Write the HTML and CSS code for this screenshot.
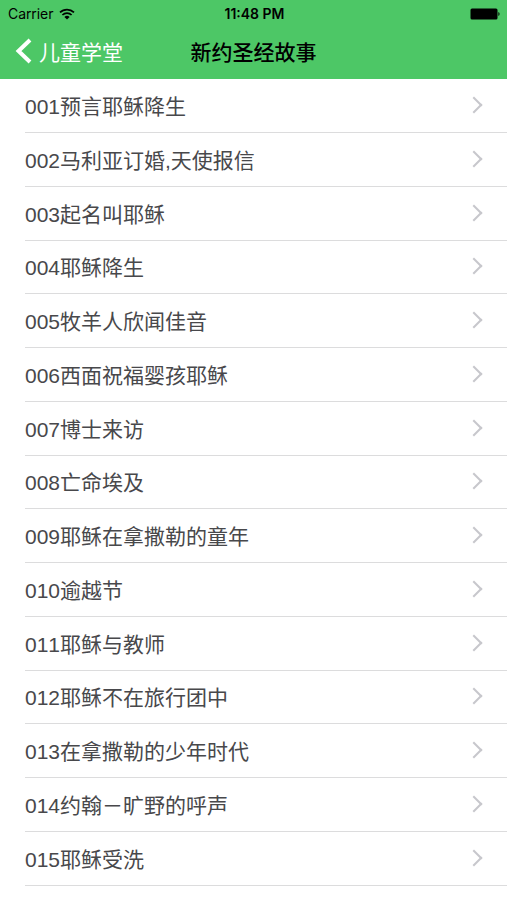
FILE: index.html
```html
<!DOCTYPE html>
<html lang="zh-CN">
<head>
    <meta charset="UTF-8">
    <meta name="viewport" content="width=device-width, initial-scale=1.0">
    <title>新约圣经故事</title>
    <link rel="stylesheet" href="styles.css">
</head>
<body>
    <header class="header">
        <div class="status-bar">
            <div class="carrier">
                <span>Carrier</span>
                <svg class="wifi" viewBox="0 0 16 12" aria-hidden="true">
                    <path d="M1 4.4a10 10 0 0 1 14 0M3.4 7a6.6 6.6 0 0 1 9.2 0" fill="none" stroke="#000" stroke-width="1.7"/>
                    <path d="M8 11.6 5.4 9a3.8 3.8 0 0 1 5.2 0z"/>
                </svg>
            </div>
            <div class="time">11:48 PM</div>
            <svg class="battery" viewBox="0 0 31 12" aria-hidden="true">
                <rect x="0.5" y="0.5" width="27" height="11" rx="1.5"/>
                <path d="M28.4 4a2.3 2.3 0 0 1 0 4z"/>
            </svg>
        </div>
        <nav class="nav-bar">
            <a class="back" href="#">
                <svg class="back-icon" viewBox="0 0 17 26" aria-hidden="true">
                    <path d="M15 2 3.5 13 15 24" fill="none" stroke="#fff" stroke-width="4"/>
                </svg>
                <span>儿童学堂</span>
            </a>
            <h1 class="title">新约圣经故事</h1>
        </nav>
    </header>
    <main>
        <ul class="story-list">
            <li><a class="story" href="#">001预言耶稣降生</a></li>
            <li><a class="story" href="#">002马利亚订婚,天使报信</a></li>
            <li><a class="story" href="#">003起名叫耶稣</a></li>
            <li><a class="story" href="#">004耶稣降生</a></li>
            <li><a class="story" href="#">005牧羊人欣闻佳音</a></li>
            <li><a class="story" href="#">006西面祝福婴孩耶稣</a></li>
            <li><a class="story" href="#">007博士来访</a></li>
            <li><a class="story" href="#">008亡命埃及</a></li>
            <li><a class="story" href="#">009耶稣在拿撒勒的童年</a></li>
            <li><a class="story" href="#">010逾越节</a></li>
            <li><a class="story" href="#">011耶稣与教师</a></li>
            <li><a class="story" href="#">012耶稣不在旅行团中</a></li>
            <li><a class="story" href="#">013在拿撒勒的少年时代</a></li>
            <li><a class="story" href="#">014约翰－旷野的呼声</a></li>
            <li><a class="story" href="#">015耶稣受洗</a></li>
        </ul>
    </main>
</body>
</html>
```
FILE: styles.css
```css
* {
    margin: 0;
    padding: 0;
    box-sizing: border-box;
}
body {
    background-color: white;
    color: #48484b;
    font-family: "Liberation Sans", "Noto Sans CJK SC", sans-serif;
    font-kerning: none;
}
a {
    color: inherit;
    text-decoration: none;
}
.header {
    background-color: #4dc766;
    color: black;
}
.status-bar {
    display: grid;
    grid-template-columns: 1fr auto 1fr;
    align-items: center;
    height: 27px;
    padding: 0 6px 0 8px;
    font-family: Inter, sans-serif;
    font-size: 14px;
}
.carrier {
    display: flex;
    align-items: center;
    gap: 6px;
}
.wifi {
    width: 16px;
    height: 12px;
}
.time {
    font-weight: 600;
}
.battery {
    width: 31px;
    height: 12px;
    justify-self: end;
}
.nav-bar {
    display: grid;
    grid-template-columns: 1fr auto 1fr;
    align-items: center;
    height: 52px;
    padding: 0 15px 4px;
}
.back {
    display: flex;
    align-items: center;
    gap: 7px;
    color: white;
    font-size: 21px;
}
.back-icon {
    width: 17px;
    height: 26px;
}
.title {
    font-size: 21px;
    font-weight: 500;
}
.story-list {
    padding-left: 25px;
    list-style: none;
}
.story {
    display: flex;
    align-items: center;
    justify-content: space-between;
    height: 54px;
    padding: 0 27px 2px 0;
    border-bottom: 1px solid #dcdcdd;
    font-size: 21px;
}
li:nth-child(4n) .story {
    height: 53px;
}
.story::after {
    content: "";
    width: 10px;
    height: 10px;
    border-top: 2px solid #c7c7cc;
    border-right: 2px solid #c7c7cc;
    transform: rotate(45deg);
}
```
